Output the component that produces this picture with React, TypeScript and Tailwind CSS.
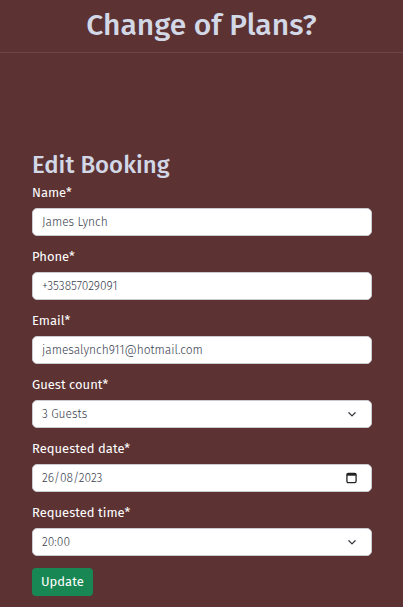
import React from "react";

const font = { fontFamily: '"Fira Sans", Lato, "Open Sans", sans-serif' };

function Chevron() {
  return (
    <svg width="10" height="10" viewBox="0 0 16 16" fill="none" stroke="#343a40" strokeWidth="2" strokeLinecap="round" strokeLinejoin="round">
      <path d="M3 6l5 5 5-5" />
    </svg>
  );
}

function Calendar() {
  return (
    <svg width="11" height="12" viewBox="0 0 12 13" fill="none">
      <rect x="1" y="1.5" width="10" height="10" rx="1.5" stroke="#222" strokeWidth="1.4" />
      <rect x="1" y="1.5" width="10" height="2.5" fill="#222" />
    </svg>
  );
}

function Field({ label, children }: { label: string; children: React.ReactNode }) {
  return (
    <div className="flex flex-col">
      <div className="h-[24px] text-[13px] leading-[16px] text-white pt-[1px]">{label}</div>
      {children}
    </div>
  );
}

function Box({ value, icon }: { value: string; icon?: React.ReactNode }) {
  return (
    <div className="h-[28px] bg-white rounded-[5px] border border-[#c9ccd1] flex items-center justify-between pl-[9px] pr-[14px] text-[12px] font-light text-[#3b4150]">
      <span>{value}</span>
      {icon}
    </div>
  );
}

export default function App() {
  return (
    <div className="w-[403px] h-[607px] bg-[#5c3233] overflow-hidden" style={font}>
      <div className="h-[53px] border-b border-[#6e4647] flex items-center justify-center">
        <h1 className="text-[30px] leading-none text-[#d2d8e6] font-medium -mt-[3px]">Change of Plans?</h1>
      </div>
      <div className="px-[32px] pt-[98px] w-[372px]">
        <h2 className="text-[24px] leading-[28px] font-medium text-[#d2d8e6] mb-[5px]">Edit Booking</h2>
        <div className="flex flex-col gap-[12px] w-[340px]">
          <Field label="Name*"><Box value="James Lynch" /></Field>
          <Field label="Phone*"><Box value="+353857029091" /></Field>
          <Field label="Email*"><Box value="jamesalynch911@hotmail.com" /></Field>
          <Field label="Guest count*"><Box value="3 Guests" icon={<Chevron />} /></Field>
          <Field label="Requested date*"><Box value="26/08/2023" icon={<Calendar />} /></Field>
          <Field label="Requested time*"><Box value="20:00" icon={<Chevron />} /></Field>
          <div>
            <button className="h-[28px] px-[9px] rounded-[4px] bg-[#198754] text-white text-[13px]">Update</button>
          </div>
        </div>
      </div>
    </div>
  );
}
